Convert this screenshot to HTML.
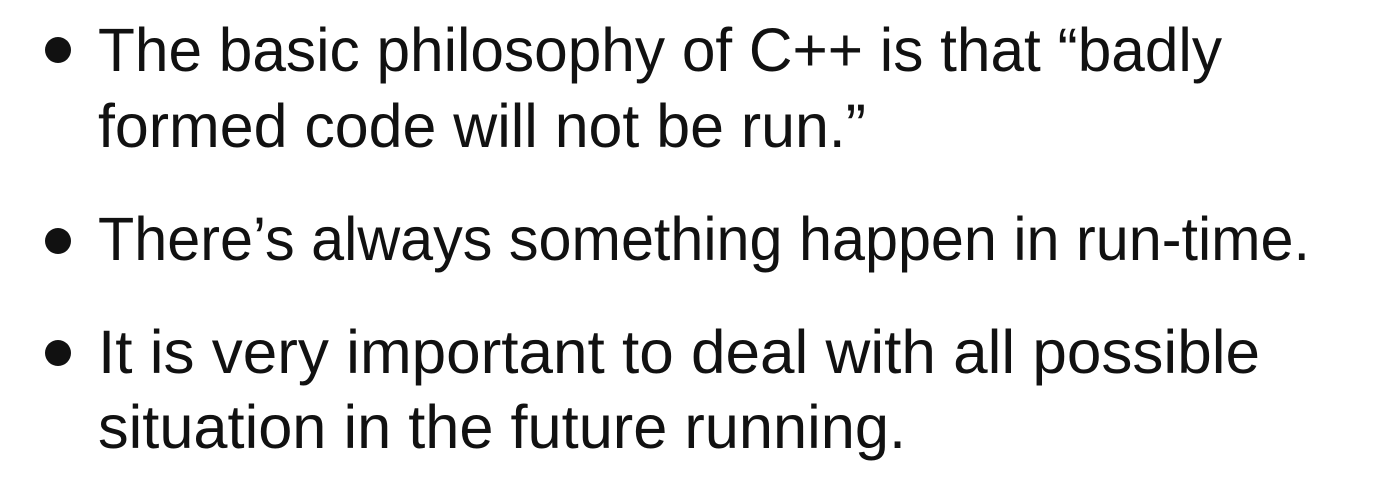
<!DOCTYPE html>
<html><head><meta charset="utf-8"><style>
html,body{margin:0;padding:0;background:#fff;width:1396px;height:477px;overflow:hidden}
svg text{font-family:"Liberation Sans",sans-serif;font-size:61px;fill:#111}
</style></head><body>
<svg width="1396" height="477" viewBox="0 0 1396 477" xmlns="http://www.w3.org/2000/svg">
<rect width="1396" height="477" fill="#fff"/>
<circle cx="58" cy="50" r="13" fill="#111"/>
<circle cx="58" cy="241" r="13" fill="#111"/>
<circle cx="58" cy="353" r="13" fill="#111"/>
<text x="98" y="71" textLength="1124" lengthAdjust="spacingAndGlyphs">The basic philosophy of C++ is that “badly</text>
<text x="98" y="147" textLength="768" lengthAdjust="spacingAndGlyphs">formed code will not be run.”</text>
<text x="98" y="260" textLength="1212" lengthAdjust="spacingAndGlyphs">There’s always something happen in run-time.</text>
<text x="98" y="373" textLength="1162" lengthAdjust="spacingAndGlyphs">It is very important to deal with all possible</text>
<text x="98" y="448" textLength="808" lengthAdjust="spacingAndGlyphs">situation in the future running.</text>
</svg>
</body></html>
